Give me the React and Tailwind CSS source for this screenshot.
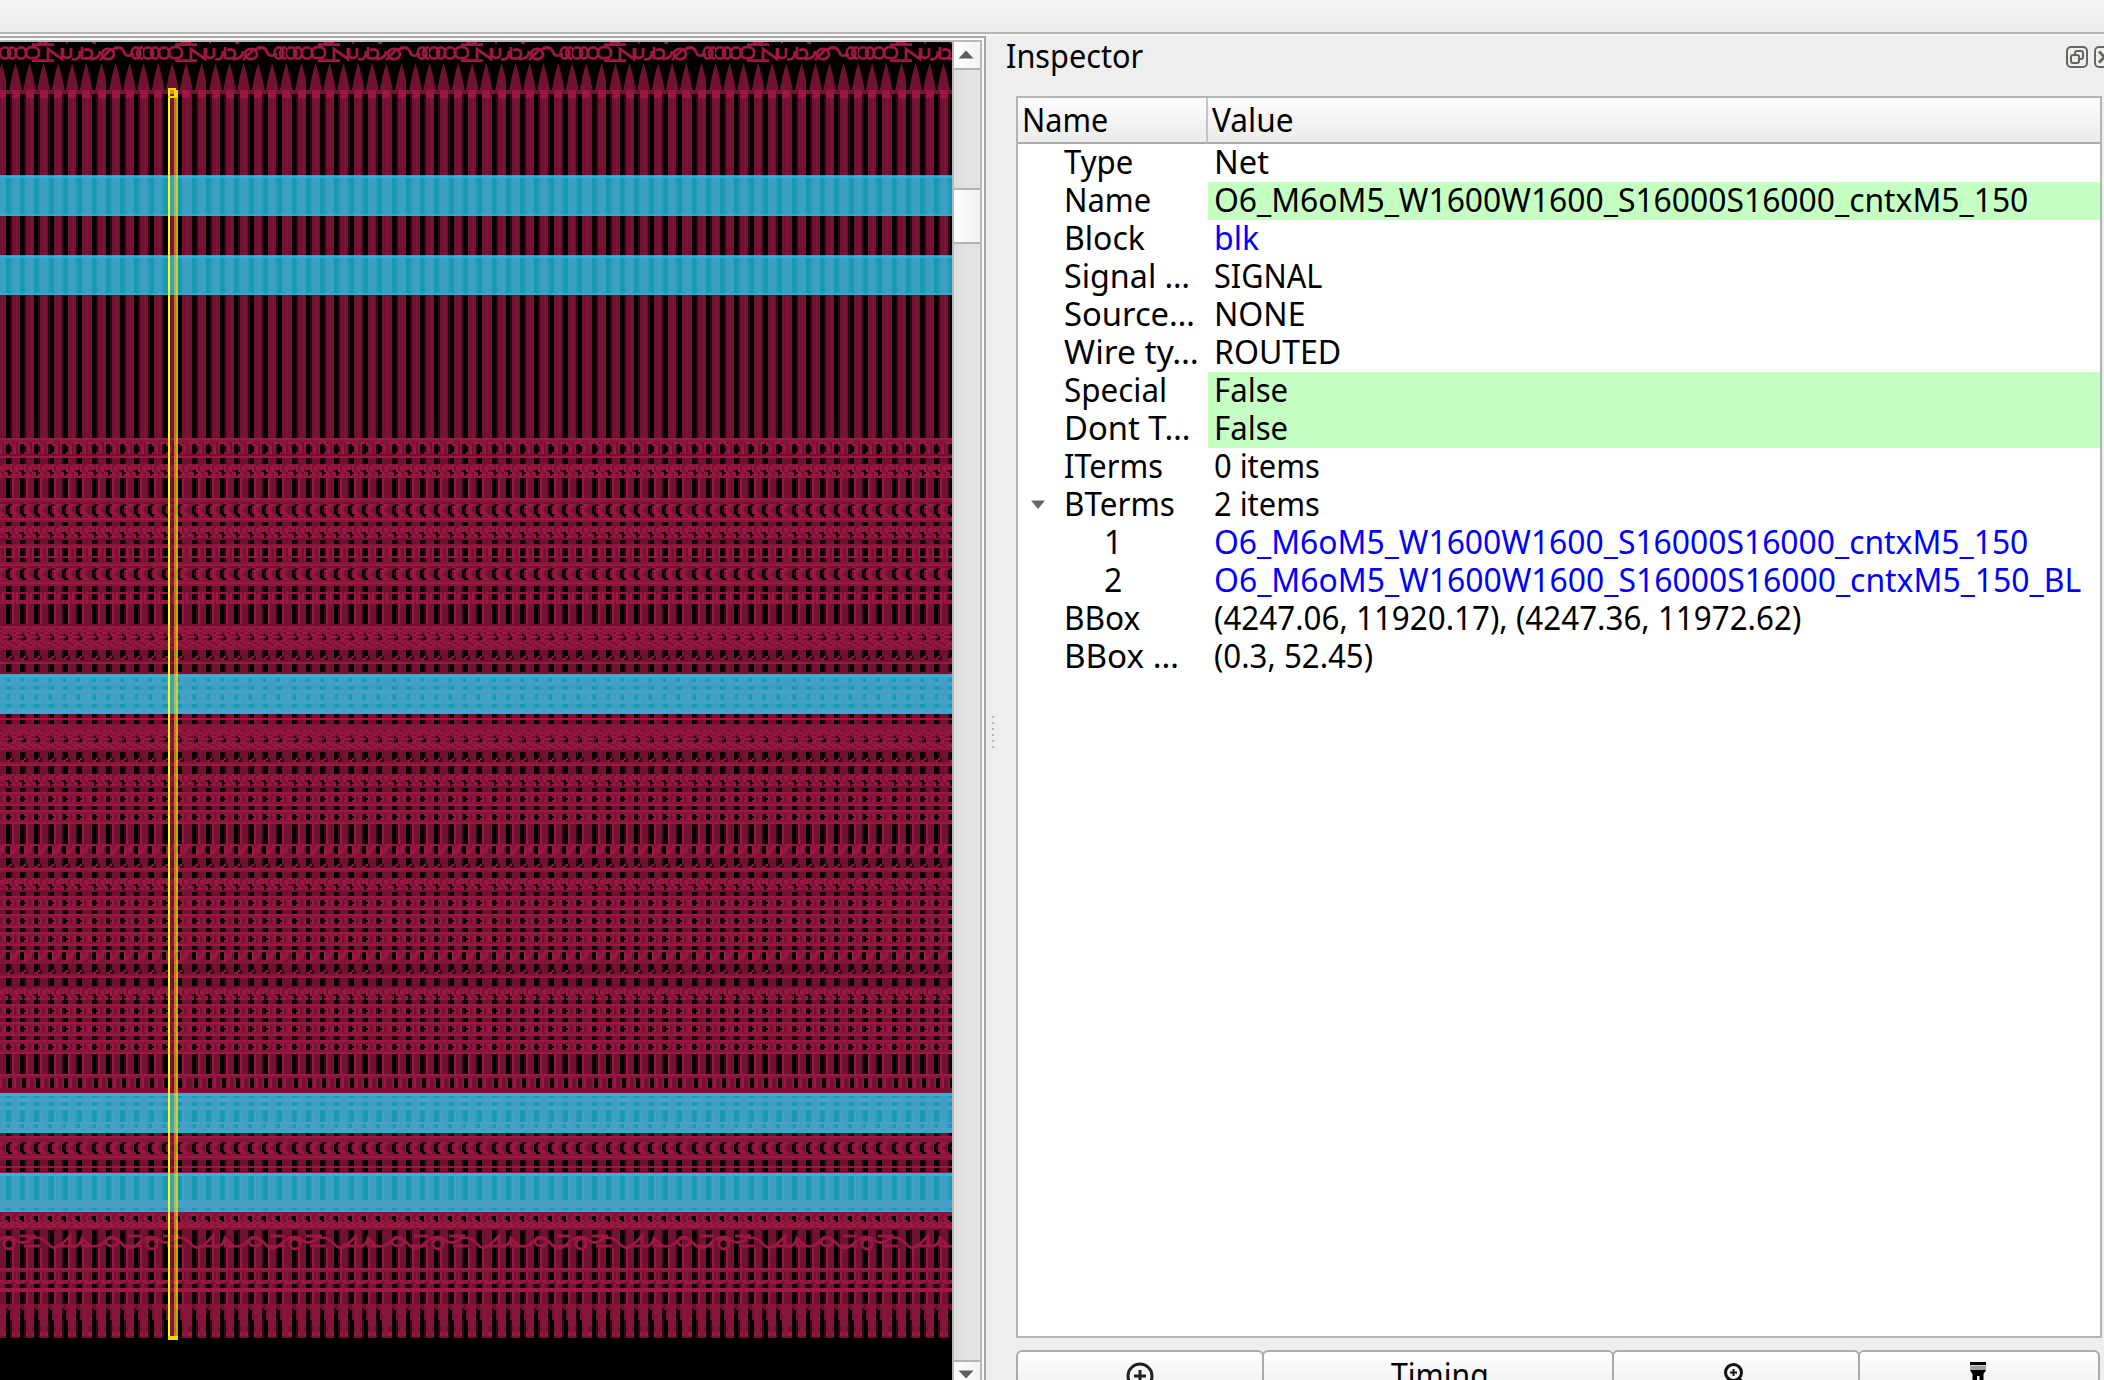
import React, { useLayoutEffect, useRef, useState } from "react";

const COLORS = { d: "#2e0814", m: "#711330", n: "#85153a", b: "#9e1645" };
const STARTS = [0, 7, 14, 21, 28, 35, 43];
const SHIFTED = [false, false, false, true, true, true, false];

const line = [[1, "bbbbbbb"]];
const soft = [[1, "nnnnnnn"]];
const dull = [[1, "mmmmmmm"]];
const gap = (n) => [[n, "##dmmmm"]];
const wire = (n) => [[n, "##dbmmm"]];
const knot = [[1, "nnbnmnb"], [2, "bnbmbbn"], [1, "d#bnnbm"], [1, "n#dbnmb"], [1, "bdnbbnn"]];
const less = [[1, "mddnbbn"], [1, "##nbbnm"], [2, "#dnbnmm"], [1, "##nbbnm"], [1, "m##nbbn"]];
const dots = [[1, "bbbbbbb"], [1, "nnnnnnn"], [1, "d#nbmnb"], [1, "##dbmnb"], [1, "d#nbmnb"], [1, "nnnnnnn"], [1, "bbbbbbb"]];
const foot = [[3, "##dmmmm"], [1, "#dbdmmm"], [1, "mbddmmm"]];
const zig = [[1, "bbnnnbb"], [1, "##bnnbn"], [1, "##bnbbm"], [1, "##bbbnm"], [1, "d#bbnnm"], [1, "nnbnnmn"]];
const weave = [[1, "nbbnmnb"], [1, "bnnbbnn"], [1, "nmnnmbb"], [1, "mdnbbnm"], [1, "bndnnbb"], [1, "md#nbnm"], [1, "nmnbbnb"], [1, "bbnmnbn"], [1, "nnbbnmb"], [1, "bmnnbbn"]];

/* Each section starts at a fixed layout row. */
const SECTIONS = [
  [219, [...line, ...soft, [1, "bnbmnmb"], [1, "d#nbnmn"], [3, "##dnbmn"], [1, "d#nnbmn"], ...dull, ...line,
    ...gap(3), ...knot, [1, "nbbnbnb"], ...wire(10)]],
  [249, [...line, ...soft, [1, "mmnnmmm"], ...less, [1, "mmdnnmb"], ...line, ...soft,
    ...gap(2), ...knot, ...dull, ...gap(2), ...soft, ...line]],
  [274, [[4, "##dbnmb"], [1, "nnbbnnn"], [2, "##dmnmn"], ...soft, ...line, [1, "mmnnmmm"], ...less, ...soft, ...line, ...soft]],
  [293, [...gap(3), [1, "bbnbmbn"], [3, "##dbnbm"], [2, "bnbbnbn"], ...wire(10)]],
  [312, [...dull, ...line, ...weave, ...soft]],
  [325, [...foot, ...dull, ...line, ...gap(4), ...dull]],
  [337, [...line, ...soft, [2, "d#bnnbm"], ...soft, ...soft, ...gap(2), ...line, ...soft, [3, "d#nbmnb"], ...line,
    ...soft, ...gap(2), ...soft, ...line, ...soft, ...gap(2), ...line, ...gap(2), ...soft]],
  [365, [...weave, ...dull]],
  [376, [...foot, ...soft, ...line, ...gap(4), ...knot, ...dull]],
  [394, [...gap(2), ...dots, ...gap(2), ...dots, ...wire(10)]],
  [422, [...zig, ...soft, ...foot, ...line, ...soft, ...gap(4)]],
  [439, [...knot, ...dull, ...gap(2), ...dots, ...gap(2), ...dots, ...gap(2), ...dots, ...gap(2)]],
  [475, [...zig, ...soft, ...foot, ...soft, ...line, ...gap(4), ...dull]],
  [494, [...knot, ...gap(2), ...dots, ...gap(2), ...dots, ...gap(2), ...dots]],
  [527, [...wire(10), ...line, ...soft, [5, "n##nbmm"], ...dull, ...dull, ...soft]],
  [547, [...soft, ...gap(1), ...soft, ...line, ...gap(2), ...line, ...soft, ...wire(6),
    ...line, [2, "d#bnnbm"], ...line, ...soft, ...gap(2)]],
  [568, [...line, ...soft, ...soft, ...less, ...soft, ...line, ...soft]],
  [580, [...gap(3), ...line, ...gap(2), ...line, ...soft, ...wire(12), ...line, ...line, ...line, ...soft, ...gap(2), ...soft]],
  [607, [[1, "bnbnmnb"], [2, "##bmnbm"], [1, "n#nbmnb"], [1, "nbbnbbn"], [1, "bnbbnnb"], [1, "bbbbnbb"], [1, "nnmmnmm"], [2, "##dmmmm"]]],
  [617, [[7, "##dmmmm"], [10, "##dbmmm"], ...line, ...soft, [4, "##dbmnm"], [1, "nbbnbbn"], [1, "bnmmnbb"],
    [2, "##dmnmm"], [2, "bbbbbbb"], [6, "##dbmmm"]]],
  [652, [[2, "mmnnnnn"], [1, "dmmnnnn"], [2, "d#mnnnn"], [3, "##mnnnn"], [3, "##dnnnn"],
    [3, "##dmnnm"], [2, "##dbnnb"], [1, "##dmmmm"]]],
];
const FIRST_ROW = 219;
const LAST_ROW = 669;

function buildPaths() {
  const out = { d: "", m: "", n: "", b: "" };
  const put = (y, count, cell) => {
    STARTS.forEach((start, k) => {
      let c = cell;
      if (SHIFTED[k] && c.startsWith("##d")) c = "d##" + c.slice(3);
      if (k === 5) c += c[6];
      for (let i = 0; i < c.length; i++) {
        if (c[i] !== "#") out[c[i]] += `M${start + i} ${y}h1v${count}h-1z`;
      }
    });
  };
  SECTIONS.forEach(([top, rows], s) => {
    const end = s + 1 < SECTIONS.length ? SECTIONS[s + 1][0] : LAST_ROW;
    let y = top;
    for (const [count, cell] of rows) {
      if (y >= end) break;
      const n = Math.min(count, end - y);
      put(y, n, cell);
      y += n;
    }
    if (y < end) put(y, end - y, "nnnnnnn");
  });
  return out;
}

const PATHS = buildPaths();
const WIRE_LENGTH = FIRST_ROW - 47;

function Spikes() {
  const d = STARTS.map((s, i) => {
    const x = s + 4.8 + (SHIFTED[i] ? 0.3 : 0);
    return `M${x} 31.5L${x + 1.8} 38L${x + 3.4} 46H${x - 3.4}L${x - 1.8} 38Z`;
  }).join("");
  return <path d={d} fill="#711330" />;
}

const BANDS = [[175, 216], [255, 295], [674, 714], [1093, 1133], [1173, 1212]];

function Layout() {
  return (
    <svg width="952" height="1338" viewBox="0 0 476 669" className="block shrink-0 bg-black">
      <defs>
        <pattern id="nets" x="3" y="-21" width="50" height="720" patternUnits="userSpaceOnUse">
          <g shapeRendering="crispEdges">
            <path fill="#711330" d={STARTS.map((s) => `M${s + 3} 47h4v${WIRE_LENGTH}h-4z`).join("")} />
            <path fill="#711330" d={`M42 47h1v${WIRE_LENGTH}h-1z`} />
            <path fill="#2e0814" d={STARTS.map((s, i) => `M${SHIFTED[i] ? s : s + 2} 47h1v${WIRE_LENGTH}h-1z`).join("")} />
            <path fill="#7d1436" d={STARTS.map((s) => `M${s + 5} 47h1v${WIRE_LENGTH}h-1z`).join("")} />
            {Object.keys(PATHS).map((k) => <path key={k} fill={COLORS[k]} d={PATHS[k]} />)}
          </g>
          <Spikes />
          <path fill="#711330" d="M0 45h50v2h-50z" />
          <path fill="#9c1645" d={STARTS.map((s) => `M${s + 3} 45h4v4h-4z`).join("")} />
        </pattern>
        <pattern id="labels" x="0" y="0" width="71.5" height="11" patternUnits="userSpaceOnUse">
          <g fill="none" stroke="#9e1645" strokeWidth="1.4">
            <ellipse cx="2.500" cy="5.5" rx="2.6" ry="2.8" />
            <ellipse cx="6" cy="5.5" rx="2" ry="2.8" />
            <ellipse cx="10.500" cy="5.5" rx="2.6" ry="2.8" />
            <rect x="13" y="2.6" width="6.5" height="5.5" rx="2.5" />
            <path d="M16 1.300h11M16 9.3h11M24 9V3.500l7 5V3M31.500 3v4q2 2 4 0V3M36 8.500q4 1 4-4M41 2.500v5.500q5 1 5-2t-4-2M45 8.500q5 0 5-4" />
            <ellipse cx="54" cy="6" rx="3" ry="2.6" />
            <path d="M57 3q4-1 5 2t5 1M50 9l5-5 4-1" />
            <ellipse cx="68" cy="5.5" rx="2.2" ry="2.8" />
            <ellipse cx="71" cy="5.5" rx="2.4" ry="2.8" />
            <path d="M19 0l2 1 3-1M33 0h1M46 0l2 .6" />
          </g>
        </pattern>
        <pattern id="tails" x="0" y="595" width="71.5" height="10" patternUnits="userSpaceOnUse">
          <path
            d="M0 4q4-3 8 0t8-1q5-1 8 3t8-1l3-3v5q5 1 6-4l4 4q5 1 8-3t9 3q4 3 9-3M2 6a2 2 0 1 0 5 0a2 2 0 1 0-5 0M53 5a3 2 0 1 0 6 0a3 2 0 1 0-6 0M10 2h8M12 7h8M28 7h10M41 3v4h5M62 7h9M64 2h7"
            fill="none" stroke="#9e1645" strokeWidth="1.4"
          />
        </pattern>
      </defs>
      <rect width="476" height="11" fill="url(#labels)" />
      <rect width="476" height="669" fill="url(#nets)" />
      <rect y="595" width="476" height="10" fill="url(#tails)" />
      {BANDS.map(([a, b]) => (
        <g key={a}>
          <rect y={(a - 42) / 2} width="476" height={(b - a) / 2} fill="#24dcff" fillOpacity="0.7" />
          <rect y={(a - 41) / 2} width="476" height="1" fill="#2bb6dc" fillOpacity="0.8" />
          <rect y={(b - 44) / 2} width="476" height="1" fill="#2bb6dc" fillOpacity="0.6" />
        </g>
      ))}
      <g shapeRendering="crispEdges">
        <rect x="84" y="24" width="1" height="625" fill="#ffff00" />
        <rect x="87" y="25" width="1" height="624" fill="#ffe000" fillOpacity="0.5" />
        <rect x="88" y="25" width="1" height="624" fill="#ffe600" fillOpacity="0.72" />
        <path d="M84 23h4v1h-4zM84 27h5v1h-5zM87 24h2v3h-2zM84 647h5v2h-5z" fill="#f0d800" />
        <rect x="85" y="24" width="2" height="2" fill="#d09a18" />
      </g>
    </svg>
  );
}

function Fit({ width, children, className = "origin-left" }) {
  const ref = useRef(null);
  const [scale, setScale] = useState(1);
  useLayoutEffect(() => {
    setScale(width / ref.current.offsetWidth);
  }, [width]);
  return (
    <span ref={ref} className={"inline-block whitespace-pre " + className} style={{ transform: `scaleX(${scale})` }}>
      {children}
    </span>
  );
}

const ITEMS = [
  ["Type", 69, "Net", 55],
  ["Name", 87, "O6_M6oM5_W1600W1600_S16000S16000_cntxM5_150", 814, "edit"],
  ["Block", 81, "blk", 45, "link"],
  ["Signal …", 126, "SIGNAL", 108],
  ["Source…", 131, "NONE", 91],
  ["Wire ty…", 135, "ROUTED", 127],
  ["Special", 103, "False", 74, "edit"],
  ["Dont T…", 127, "False", 74, "edit"],
  ["ITerms", 99, "0 items", 106],
  ["BTerms", 111, "2 items", 106, "open"],
  ["1", 18, "O6_M6oM5_W1600W1600_S16000S16000_cntxM5_150", 814, "child"],
  ["2", 18, "O6_M6oM5_W1600W1600_S16000S16000_cntxM5_150_BL", 867, "child"],
  ["BBox", 76, "(4247.06, 11920.17), (4247.36, 11972.62)", 587],
  ["BBox …", 115, "(0.3, 52.45)", 159],
];

function Row({ item }) {
  const [name, nw, value, vw, kind] = item;
  return (
    <div className="flex h-[38px] leading-[36px]">
      <div className={"flex w-[190px] shrink-0 items-start " + (kind === "child" ? "pl-[86px]" : "pl-[46px]")}>
        {kind === "open" && (
          <svg width="16" height="10" viewBox="0 0 16 10" className="-ml-[34px] mr-[18px] mt-3.5 shrink-0">
            <path d="M1 .5h14L8 9z" fill="#666" />
          </svg>
        )}
        <Fit width={nw}>{name}</Fit>
      </div>
      <div className={"flex-1 pl-1.5 " + (kind === "edit" ? "bg-[#c5ffc1]" : kind === "link" || kind === "child" ? "text-[#0000ff]" : "")}>
        <Fit width={vw}>{value}</Fit>
      </div>
    </div>
  );
}

const BUTTON = "flex h-[60px] shrink-0 justify-center rounded-t-md border-2 border-[#ababab] bg-linear-to-b from-white to-[#e8e8e8] ";

export default function App() {
  return (
    <div className="flex h-[1380px] w-[2104px] flex-col overflow-hidden bg-[#eeeeee] font-['Noto_Sans',sans-serif] text-[32px] text-black">
      <div className="h-9 shrink-0 border-b-2 border-[#f8f8f8] bg-linear-to-b from-[#f3f3f3] to-[#ebebeb]">
        <div className="h-[34px] border-b-2 border-[#b4b4b4]" />
      </div>
      <div className="flex h-[1344px]">
        <div className="w-[986px] shrink-0 border-r-2 border-t-2 border-[#a6a6a6]">
          <div className="border-r-2 border-t-2 border-[#fafafa]">
            <div className="flex h-[1340px] border-r-2 border-t-2 border-[#b8b8b8]">
              <Layout />
              <div className="flex h-[1338px] flex-1 flex-col border-l-2 border-[#b8b8b8] bg-linear-to-r from-[#dcdcdc] via-[#e4e4e4] to-[#e2e2e2]">
                <div className="flex h-7 shrink-0 justify-center border-b-2 border-[#b4b4b4] bg-linear-to-r from-white to-[#f3f3f3] pt-2">
                  <svg width="16" height="9" viewBox="0 0 16 9" className="-ml-0.5"><path d="M8 .5L15.500 8.500H.5z" fill="#5c5c5c" /></svg>
                </div>
                <div className="h-[118px] shrink-0" />
                <div className="h-14 shrink-0 border-y-2 border-[#b4b4b4] bg-linear-to-r from-white to-[#f0f0f0]" />
                <div className="flex-1" />
                <div className="flex h-5 shrink-0 justify-center border-t-2 border-[#b4b4b4] bg-linear-to-r from-white to-[#f3f3f3] pt-2">
                  <svg width="16" height="9" viewBox="0 0 16 9" className="-ml-0.5"><path d="M8 8.500L15.500 .5H.5z" fill="#5c5c5c" /></svg>
                </div>
              </div>
            </div>
          </div>
        </div>
        <div className="flex w-[30px] shrink-0 flex-col gap-1 pl-1.5 pt-[680px]">
          {[0, 1, 2, 3, 4, 5].map((i) => <div key={i} className="size-0.5 bg-[#b4b4b4]" />)}
        </div>
        <div className="flex w-[1088px] shrink-0 flex-col">
          <div className="flex h-[60px] shrink-0 items-start">
            <div className="-ml-2.5 flex-1 pt-px leading-[38px]"><Fit width={137}>Inspector</Fit></div>
            <svg width="22" height="22" viewBox="0 0 22 22" className="mr-1.5 mt-2.5 shrink-0" fill="none" stroke="#67655f" strokeWidth="2">
              <rect x="1" y="1" width="20" height="20" rx="4" />
              <rect x="5" y="9" width="8" height="8" rx="2" />
              <path d="M9 9V7q0-2 2-2h4q2 0 2 2v4q0 2-2 2h-2" />
            </svg>
            <svg width="10" height="22" viewBox="0 0 10 22" className="mt-2.5 shrink-0" fill="none" stroke="#67655f" strokeWidth="2">
              <rect x="1" y="1" width="20" height="20" rx="4" />
              <path d="M5 5.500l11 11M5 16.500l11-11" strokeWidth="3" />
            </svg>
          </div>
          <div className="h-[1242px] w-[1086px] shrink-0 border-2 border-[#b4b4b4] bg-white">
            <div className="flex h-[46px] border-b-2 border-[#ababab] bg-linear-to-b from-[#fdfdfd] to-[#ebebeb] leading-[44px]">
              <div className="w-[190px] border-r-2 border-[#c4c4c4] pl-1"><Fit width={86}>Name</Fit></div>
              <div className="pl-1"><Fit width={82}>Value</Fit></div>
            </div>
            {ITEMS.map((item, i) => <Row key={i} item={item} />)}
          </div>
          <div className="mt-3 flex shrink-0">
            <div className={BUTTON + "w-[248px] pt-2.5"}>
              <svg width="28" height="28" viewBox="0 0 28 28" fill="none" stroke="#222" strokeWidth="3">
                <circle cx="14" cy="14" r="12" /><path d="M14 8v12M8 14h12" />
              </svg>
            </div>
            <div className={BUTTON + "-ml-0.5 w-[352px] pl-1 pt-px leading-[44px]"}><Fit width={98} className="origin-center">Timing</Fit></div>
            <div className={BUTTON + "-ml-0.5 w-[248px] pt-[11px]"}>
              <svg width="24" height="26" viewBox="0 0 24 26" fill="none" stroke="#111" strokeWidth="3">
                <circle cx="9.500" cy="9.500" r="8" /><path d="M9.500 6v7M6 9.500h7" strokeWidth="2" /><path d="M14 15l7 8" strokeWidth="4" />
              </svg>
            </div>
            <div className={BUTTON + "-ml-0.5 w-[242px] pt-2.5"}>
              <svg width="16" height="28" viewBox="0 0 16 28" className="-ml-0.5" fill="#000">
                <path d="M0 0h16v3H0z" /><path d="M0 3.500h16V8H0z" fill="#a0a0a0" /><path d="M0 8h16l-2.500 4v16h-11V12z" /><path d="M7 14h2.500v5H7z" fill="#eee" />
              </svg>
            </div>
          </div>
        </div>
      </div>
    </div>
  );
}
